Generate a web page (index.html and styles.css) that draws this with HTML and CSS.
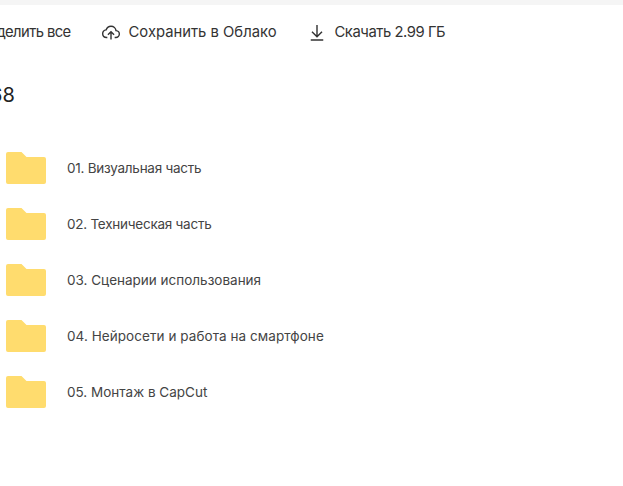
FILE: index.html
```html
<!DOCTYPE html>
<html lang="ru">
<head>
<meta charset="utf-8">
<title>Папка</title>
<link rel="stylesheet" href="styles.css">
</head>
<body>
<div class="topband"></div>
<main class="page">
  <div class="toolbar">
    <button class="action select-all">Выделить все</button>
    <button class="action save">
      <svg class="icon" viewBox="0 0 24 24" fill="none" stroke="#333" stroke-width="1.7"><path d="M7.6 18.6H6.8C3.9 18.4 2 16.4 2 14c0-2.400 1.800-4.300 4.200-4.600C7.200 6.700 9.400 5 12 5c3.100 0 5.700 2.300 6 5.300 2.300.2 4 1.900 4 4.100 0 2.300-1.900 4.200-4.200 4.200h-1.400"/><path d="M12 21v-9M8.300 15.300 12 11.600l3.700 3.700"/></svg>
      <span>Сохранить в Облако</span>
    </button>
    <button class="action download">
      <svg class="icon" viewBox="0 0 24 24" fill="none" stroke="#333" stroke-width="1.7"><path d="M12 3.500v14M6 11.600l6 6 6-6M4.500 21.500h15"/></svg>
      <span class="size">Скачать 2.99 ГБ</span>
    </button>
  </div>
  <h1 class="title">68</h1>
  <ul class="list">
    <li class="row tight"><svg class="folder" viewBox="0 0 40 32"><path d="M2 0h13.500l5 5H38a2 2 0 0 1 2 2v23a2 2 0 0 1-2 2H2a2 2 0 0 1-2-2V2a2 2 0 0 1 2-2z"/></svg><span>01. Визуальная часть</span></li>
    <li class="row tight"><svg class="folder" viewBox="0 0 40 32"><path d="M2 0h13.500l5 5H38a2 2 0 0 1 2 2v23a2 2 0 0 1-2 2H2a2 2 0 0 1-2-2V2a2 2 0 0 1 2-2z"/></svg><span>02. Техническая часть</span></li>
    <li class="row"><svg class="folder" viewBox="0 0 40 32"><path d="M2 0h13.500l5 5H38a2 2 0 0 1 2 2v23a2 2 0 0 1-2 2H2a2 2 0 0 1-2-2V2a2 2 0 0 1 2-2z"/></svg><span>03. Сценарии использования</span></li>
    <li class="row wide"><svg class="folder" viewBox="0 0 40 32"><path d="M2 0h13.500l5 5H38a2 2 0 0 1 2 2v23a2 2 0 0 1-2 2H2a2 2 0 0 1-2-2V2a2 2 0 0 1 2-2z"/></svg><span>04. Нейросети и работа на смартфоне</span></li>
    <li class="row"><svg class="folder" viewBox="0 0 40 32"><path d="M2 0h13.500l5 5H38a2 2 0 0 1 2 2v23a2 2 0 0 1-2 2H2a2 2 0 0 1-2-2V2a2 2 0 0 1 2-2z"/></svg><span>05. Монтаж в CapCut</span></li>
  </ul>
</main>
</body>
</html>
```
FILE: styles.css
```css
html, body {
  margin: 0;
  padding: 0;
  background: #fff;
  overflow: hidden;
  height: 486px;
  font-family: "Inter", "Roboto", sans-serif;
  color: #333;
}
.topband {
  height: 5px;
  background: #f5f5f5;
}
.page {
  margin-left: -10px;
}
.toolbar {
  display: flex;
  align-items: center;
  height: 54px;
  white-space: nowrap;
  margin-left: -13px;
}
.action {
  display: flex;
  align-items: center;
  gap: 8px;
  border: 0;
  padding: 0;
  background: none;
  font: 14.800px "Inter", "Roboto", sans-serif;
  color: #333;
}
.select-all { letter-spacing: -0.6px; }
.save { margin-left: 30px; }
.download { margin-left: 30px; }
.size { letter-spacing: -0.45px; }
.icon { width: 20px; height: 20px; }
.title {
  margin: 23px 0 0 0;
  font-size: 20px;
  line-height: 26px;
  font-weight: 400;
  color: #222;
}
.list {
  list-style: none;
  margin: 32px 0 0 16px;
  padding: 0;
}
.row {
  display: flex;
  align-items: center;
  height: 56px;
  gap: 21px;
  font-size: 13.500px;
  color: #444;
}
.tight { letter-spacing: -0.25px; }
.wide { letter-spacing: 0.06px; }
.folder {
  width: 40px;
  height: 32px;
  fill: #ffdc6e;
  flex: none;
}
```
